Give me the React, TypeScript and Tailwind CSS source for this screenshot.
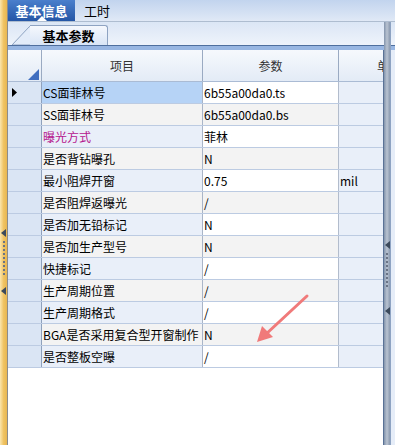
import React from 'react';

const FONT = { fontFamily: '"Noto Sans CJK SC", "Liberation Sans", sans-serif' };

type Row = { name: string; value: string; unit?: string; accent?: boolean };

const ROWS: Row[] = [
  { name: 'CS面菲林号', value: '6b55a00da0.ts' },
  { name: 'SS面菲林号', value: '6b55a00da0.bs' },
  { name: '曝光方式', value: '菲林', accent: true },
  { name: '是否背钻曝孔', value: 'N' },
  { name: '最小阻焊开窗', value: '0.75', unit: 'mil' },
  { name: '是否阻焊返曝光', value: '/' },
  { name: '是否加无铅标记', value: 'N' },
  { name: '是否加生产型号', value: 'N' },
  { name: '快捷标记', value: '/' },
  { name: '生产周期位置', value: '/' },
  { name: '生产周期格式', value: '/' },
  { name: 'BGA是否采用复合型开窗制作', value: 'N' },
  { name: '是否整板空曝', value: '/' },
];

const Grip = ({ top, gap }: { top: number; gap: number }) => (
  <div className="flex flex-col items-center" style={{ paddingTop: top }}>
    <svg width="5" height="8" viewBox="0 0 5 8">
      <polygon points="5,0 5,8 0,4" fill="#3c4a5c" />
    </svg>
    <div className="w-0 h-[34px] mt-[4px] border-l-2 border-dotted border-[#6a7486]" />
    <div style={{ height: gap }} />
    <svg width="5" height="8" viewBox="0 0 5 8">
      <polygon points="5,0 5,8 0,4" fill="#3c4a5c" />
    </svg>
  </div>
);

export default function App() {
  return (
    <div className="relative w-[395px] h-[445px] flex overflow-hidden bg-white text-[12px] text-black" style={FONT}>
      {/* left collapse strip */}
      <div className="w-[8px] h-full shrink-0 bg-gradient-to-r from-[#fbe6ad] via-[#f0c464] to-[#e8b650] border-r border-[#8c8c8c]">
        <Grip top={229} gap={12} />
      </div>

      <div className="flex-1 flex flex-col min-w-0">
        {/* top tab bar */}
        <div className="h-[22px] shrink-0 flex items-stretch bg-gradient-to-b from-[#c2d4ee] to-[#e0e9f6] border-b border-[#aebdd0]">
          <div className="relative w-[67px] flex items-center justify-center bg-gradient-to-b from-[#4a7fcc] to-[#2456a6] text-white font-bold text-[13px]">
            基本信息
            <div className="absolute bottom-0 left-[29px] w-0 h-0 border-l-[5px] border-r-[5px] border-b-[5px] border-l-transparent border-r-transparent border-b-white" />
          </div>
          <div className="pl-[9px] flex items-center text-[13px]">工时</div>
        </div>

        <div className="flex-1 flex min-h-0">
          {/* grid panel */}
          <div className="w-[376px] shrink-0 flex flex-col">
            {/* sub tab strip */}
            <div className="h-[23px] shrink-0 flex items-end bg-gradient-to-b from-[#dbe6f5] to-[#eef3fb] pl-[4px]">
              <svg width="19" height="20" viewBox="0 0 19 20" className="shrink-0 -mr-px">
                <path d="M0 20 L17 2 Q18 1 19 1 L19 20 Z" fill="#e3ecf9" stroke="#8ea3c2" strokeWidth="1" />
              </svg>
              <div className="w-[78px] h-[20px] flex items-center justify-center font-bold text-[13px] bg-gradient-to-b from-[#f5f8fd] to-[#d9e5f6] border-t border-r border-[#8ea3c2] rounded-tr-[3px]">
                基本参数
              </div>
            </div>
            <div className="h-[5px] shrink-0 bg-[#98b6e2] border-t border-[#4f6f9e]" />

            {/* grid */}
            <div className="overflow-hidden border-r border-[#5a7296] flex-1">
              <div className="flex h-[32px] bg-gradient-to-b from-[#f6f9fd] to-[#e3ebf6] border-b border-[#aabbd4] text-[#333]">
                <div className="relative w-[34px] shrink-0 border-r border-[#9aaac2]">
                  <svg width="11" height="11" viewBox="0 0 11 11" className="absolute right-[2px] bottom-[1px]">
                    <polygon points="11,0 11,11 0,11" fill="#3f6ec0" />
                  </svg>
                </div>
                <div className="w-[161px] shrink-0 flex items-center justify-center border-r border-[#9aaac2]">项目</div>
                <div className="w-[136px] shrink-0 flex items-center justify-center border-r border-[#9aaac2]">参数</div>
                <div className="w-[100px] shrink-0 flex items-center justify-center">单位</div>
              </div>

              {ROWS.map((r, i) => {
                const odd = i % 2 === 0;
                const nameBg = i === 0 ? 'bg-[#b6d3f6]' : odd ? 'bg-[#e9eff9]' : 'bg-[#f3f3f3]';
                const valBg = odd ? 'bg-white' : 'bg-[#f3f3f3]';
                return (
                  <div key={r.name} className="flex h-[22px] border-b border-[#bccbe2]">
                    <div className="w-[34px] shrink-0 bg-[#dae5f4] border-r border-[#8fa1bc] flex items-center pl-[4px]">
                      {i === 0 && (
                        <svg width="5" height="9" viewBox="0 0 5 9">
                          <polygon points="0,0 5,4.5 0,9" fill="#000" />
                        </svg>
                      )}
                    </div>
                    <div
                      className={`w-[161px] shrink-0 flex items-center pl-px overflow-hidden whitespace-nowrap border-r border-[#a9b5c8] ${nameBg} ${r.accent ? 'text-[#b5168e]' : ''}`}
                    >
                      {r.name}
                    </div>
                    <div className={`w-[136px] shrink-0 flex items-center pl-px border-r border-[#b2bccc] ${valBg}`}>{r.value}</div>
                    <div className="w-[100px] shrink-0 flex items-center pl-px bg-[#e9eff9]">{r.unit ?? ''}</div>
                  </div>
                );
              })}
            </div>
          </div>

          {/* splitter */}
          <div className="w-[6px] shrink-0 bg-gradient-to-r from-[#8394ac] via-[#b9c3d1] to-[#8b9ab0]">
            <Grip top={219} gap={20} />
          </div>

          {/* right panel */}
          <div className="flex-1 flex flex-col bg-[#e6edf8] border-l border-[#8ea3c2]">
            <div className="h-[23px] bg-gradient-to-b from-[#dbe6f5] to-[#eef3fb]" />
            <div className="h-[5px] bg-[#98b6e2] border-t border-[#4f6f9e]" />
          </div>
        </div>
      </div>

      {/* annotation arrow */}
      <svg className="absolute left-0 top-0 pointer-events-none" width="395" height="445">
        <line x1="307" y1="296" x2="265" y2="335" stroke="#f07a7a" strokeWidth="3" strokeLinecap="round" />
        <polygon points="257,342 262,326 273,337" fill="#f07a7a" />
      </svg>
    </div>
  );
}
